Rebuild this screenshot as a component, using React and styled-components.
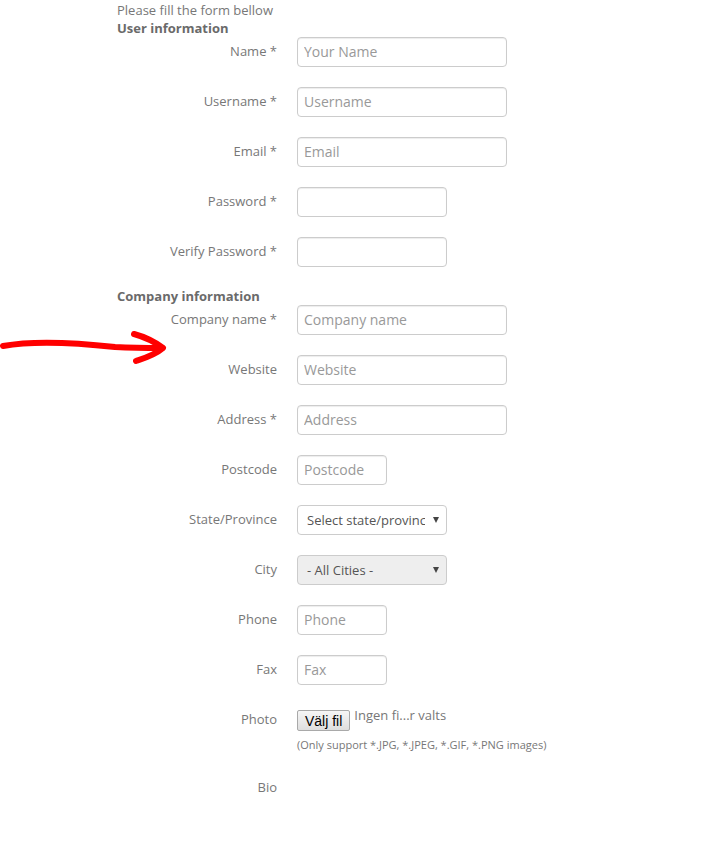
import React from 'react'
import styled, { createGlobalStyle } from 'styled-components'

const GlobalStyle = createGlobalStyle`
  html, body {
    margin: 0;
    padding: 0;
    background: #fff;
  }
  body {
    font-family: "Open Sans", "DejaVu Sans", sans-serif;
    font-size: 13px;
    color: #777;
  }
`

const Page = styled.div`
  position: relative;
  width: 728px;
  min-height: 857px;
`

const Form = styled.form`
  padding: 1px 0 0 117px;
  width: 500px;
`

const Intro = styled.div`
  line-height: 18px;
`

const SectionTitle = styled.div`
  font-weight: 700;
  line-height: 18px;
  color: #6a6a6a;
`

const Row = styled.div`
  display: grid;
  grid-template-columns: 160px 1fr;
  column-gap: 20px;
  margin-bottom: ${p => p.$gap ?? 20}px;
`

const Label = styled.label`
  text-align: right;
  line-height: 18px;
  padding-top: ${p => p.$top ?? 5}px;
`

const Field = styled.div`
  display: flex;
  flex-direction: column;
`

const TextInput = styled.input`
  box-sizing: border-box;
  width: ${p => p.$w}px;
  height: 30px;
  margin: 0;
  padding: 3px 6px 5px;
  border: 1px solid #ccc;
  border-radius: 4px;
  box-shadow: inset 0 1px 1px rgba(0, 0, 0, 0.075);
  font-family: "Open Sans", "DejaVu Sans", sans-serif;
  font-size: 14px;
  color: #555;
  background: #fff;
  outline: none;

  &::placeholder {
    color: #999;
  }
`

const Select = styled.div`
  box-sizing: border-box;
  width: ${p => p.$w}px;
  height: 30px;
  display: flex;
  align-items: center;
  padding: 0 7px 1px 9px;
  border: 1px solid #ccc;
  border-radius: 4px;
  background: ${p => (p.$disabled ? '#eee' : '#fff')};
  font-size: 13px;
  color: #555;
`

const SelectText = styled.span`
  flex: 1;
  min-width: 0;
  overflow: hidden;
  white-space: nowrap;
`

const Caret = styled.span`
  flex: none;
  width: 0;
  height: 0;
  margin-left: 8px;
  border-left: 3px solid transparent;
  border-right: 3px solid transparent;
  border-top: 6px solid #444;
`

const FileLine = styled.div`
  display: flex;
  align-items: flex-start;
  gap: 4px;
  padding-top: 5px;
`

const FileButton = styled.button`
  box-sizing: border-box;
  height: 21px;
  padding: 0 7px;
  border: 1px solid #a9a9a9;
  border-radius: 2px;
  background: linear-gradient(#f6f6f6, #dedede);
  font-family: "Liberation Sans", Arial, sans-serif;
  font-size: 14px;
  color: #000;
`

const FileName = styled.span`
  line-height: 16px;
  margin-top: -3px;
`

const Help = styled.div`
  font-size: 11px;
  line-height: 16px;
  margin-top: 6px;
  white-space: nowrap;
  color: #777;
`

const Arrow = styled.svg`
  position: absolute;
  left: 0;
  top: 325px;
`

const userRows = [
  { label: 'Name *', ph: 'Your Name', w: 210 },
  { label: 'Username *', ph: 'Username', w: 210 },
  { label: 'Email *', ph: 'Email', w: 210 },
  { label: 'Password *', ph: '', w: 150, type: 'password' },
  { label: 'Verify Password *', ph: '', w: 150, type: 'password' },
]

const companyRows = [
  { label: 'Company name *', ph: 'Company name', w: 210 },
  { label: 'Website', ph: 'Website', w: 210 },
  { label: 'Address *', ph: 'Address', w: 210 },
  { label: 'Postcode', ph: 'Postcode', w: 90 },
]

const contactRows = [
  { label: 'Phone', ph: 'Phone', w: 90 },
  { label: 'Fax', ph: 'Fax', w: 90 },
]

const InputRow = ({ label, ph, w, type = 'text' }) => (
  <Row>
    <Label>{label}</Label>
    <Field>
      <TextInput type={type} placeholder={ph} $w={w} />
    </Field>
  </Row>
)

export default function App() {
  return (
    <Page>
      <GlobalStyle />
      <Form onSubmit={e => e.preventDefault()}>
        <Intro>Please fill the form bellow</Intro>
        <SectionTitle>User information</SectionTitle>
        {userRows.map(r => <InputRow key={r.label} {...r} />)}

        <SectionTitle>Company information</SectionTitle>
        {companyRows.map(r => <InputRow key={r.label} {...r} />)}

        <Row>
          <Label>State/Province</Label>
          <Field>
            <Select $w={150}>
              <SelectText>Select state/provinc</SelectText>
              <Caret />
            </Select>
          </Field>
        </Row>
        <Row>
          <Label>City</Label>
          <Field>
            <Select $w={150} $disabled>
              <SelectText>- All Cities -</SelectText>
              <Caret />
            </Select>
          </Field>
        </Row>

        {contactRows.map(r => <InputRow key={r.label} {...r} />)}

        <Row $gap={20}>
          <Label $top={5}>Photo</Label>
          <Field>
            <FileLine>
              <FileButton type="button">Välj fil</FileButton>
              <FileName>Ingen fi...r valts</FileName>
            </FileLine>
            <Help>(Only support *.JPG, *.JPEG, *.GIF, *.PNG images)</Help>
          </Field>
        </Row>

        <Row>
          <Label>Bio</Label>
        </Row>
      </Form>

      <Arrow width="170" height="45" viewBox="0 0 170 45">
        <g fill="none" stroke="#ff0000" strokeWidth="6" strokeLinecap="round" strokeLinejoin="round">
          <path d="M3 21 C 30 16, 70 17, 115 22 C 135 23, 150 23, 162 23" />
          <path d="M134 9 C 145 12, 155 17, 163 23 C 155 30, 145 33, 136 36" />
        </g>
      </Arrow>
    </Page>
  )
}
